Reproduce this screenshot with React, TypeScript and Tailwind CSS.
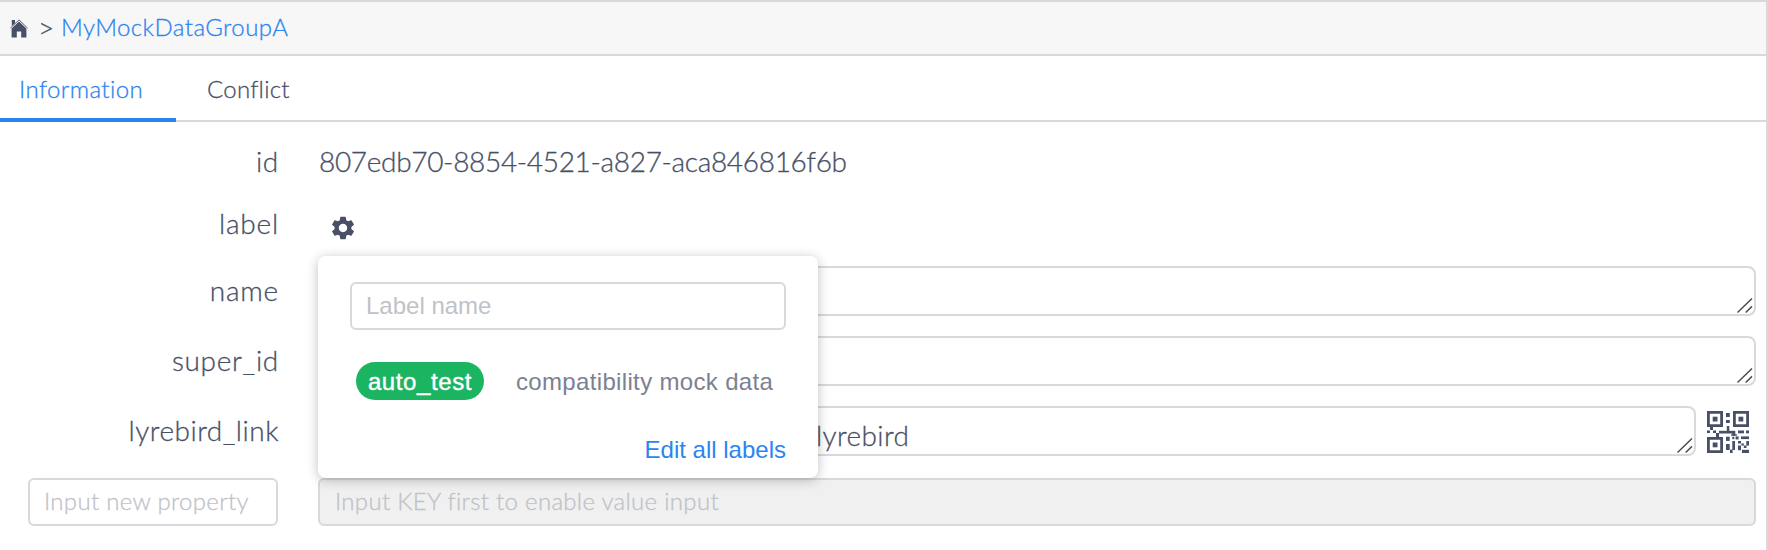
import type { ReactNode } from "react";
import { MdSettings } from "react-icons/md";

const light =
  "font-['Lato',sans-serif] font-light whitespace-nowrap [font-variant-ligatures:none] [-webkit-text-stroke:0.3px_currentColor]";

function HomeIcon() {
  return (
    <svg width="18" height="19" viewBox="0 0 18 19" fill="#475066">
      <path d="M1.8 1h3.2v3.2L1.8 7z" />
      <path d="M0.4 9.1 9 0.9l8.6 8.2" fill="none" stroke="#475066" strokeWidth="0.9" />
      <path d="M9 2.5 16.4 9.5V18.4H11.2V12.6H6.8V18.4H1.6V9.5z" />
    </svg>
  );
}

const finder = (x: number, y: number) => `M${x} ${y}h16v16h-16zM${x + 2.8} ${y + 2.8}v10.4h10.4v-10.4z`;

const modules: number[][] = [
  [5.7, 5.7, 4.8, 4.8], [31.5, 5.7, 4.8, 4.8], [5.7, 31.5, 4.8, 4.8],
  [19, 2, 3.8, 4], [19, 9, 3.8, 3], [19.8, 15, 2.5, 5],
  [3, 16, 3, 3], [0, 19.5, 3, 2.5], [6, 19.5, 3, 2.5], [9, 22, 3, 4],
  [12, 19.8, 16, 2.7], [25.3, 20, 3, 4.8],
  [31, 19.5, 6, 2.8], [39, 19.5, 3, 2.8], [28.6, 25.4, 3, 3], [34, 25.4, 8, 2.7], [24, 23.3, 6, 1.3],
  [19, 25.7, 3.7, 4.2], [19, 33, 3.7, 6], [23, 38.6, 2.6, 3.4],
  [25.3, 30, 2.7, 9], [25.3, 25.7, 2, 2.5], [31, 30, 3, 2.5], [31, 34.5, 3, 4.7],
  [34.4, 32.4, 2.4, 2.2], [36.8, 34.5, 2.7, 2.5], [39.3, 30, 2.7, 4.6], [35, 38.8, 7, 3.2],
];

function QrIcon() {
  return (
    <svg width="42" height="42" viewBox="0 0 42 42" fill="#475066">
      <path d={finder(0, 0) + finder(26, 0) + finder(0, 26)} fillRule="evenodd" />
      {modules.map(([x, y, w, h]) => (
        <rect key={`${x}-${y}`} x={x} y={y} width={w} height={h} />
      ))}
    </svg>
  );
}

function Grip() {
  return (
    <svg className="mr-px" width="16" height="16" viewBox="0 0 16 16" stroke="#4d4d4d" strokeWidth="1.5">
      <path d="M0.5 14.5 15 0.5M8.7 14.5 15 8.4" />
    </svg>
  );
}

function Area({ children }: { children?: ReactNode }) {
  return (
    <div className="flex h-[50px] flex-1 items-end justify-between rounded-lg border-2 border-[#d8d8de] bg-white">
      <div className={`${light} pb-0.5 pl-[496px] text-[28px] leading-[34px] tracking-[0.4px]`}>{children}</div>
      <Grip />
    </div>
  );
}

interface RowProps {
  name: string;
  height: string;
  tracking: string;
  lift?: string;
  children: ReactNode;
}

function Row({ name, height, tracking, lift = "pb-[3px]", children }: RowProps) {
  return (
    <div className={`flex items-center ${height}`}>
      <div className={`${light} ${tracking} ${lift} w-[279px] text-right text-[28px] leading-8`}>{name}</div>
      <div className="ml-[39px] flex flex-1 items-center">{children}</div>
    </div>
  );
}

function LabelPopover() {
  return (
    <div className="absolute top-[256px] left-[318px] h-[222px] w-[500px] rounded-lg bg-white px-8 pt-[26px] font-['Liberation_Sans',sans-serif] text-2xl whitespace-nowrap shadow-[0_2px_12px_rgba(0,0,0,0.25)]">
      <div className="flex h-12 w-[436px] items-center rounded-md border-2 border-[#d8d8de] pl-[14px] text-[#bfc2c8]">
        Label name
      </div>
      <div className="mt-8 ml-1.5 flex h-[38px] items-center">
        <span className="flex h-[38px] w-32 items-center justify-center rounded-full bg-[#1bb562] pt-px tracking-[0.6px] text-white [-webkit-text-stroke:0.4px_white]">
          auto_test
        </span>
        <span className="ml-8 pt-px tracking-[0.34px] text-[#7b8192]">compatibility mock data</span>
      </div>
      <div className="mt-8 text-right leading-9 text-[#2b85f0]">Edit all labels</div>
    </div>
  );
}

export default function App() {
  return (
    <div className="relative h-[550px] w-[1768px] overflow-hidden border-t-2 border-r-2 border-[#d8d8de] bg-white text-[#475066]">
      <header className="flex h-[54px] items-center border-b-2 border-[#d8d8de] bg-[#f7f7f7] pb-[2px] pl-2.5">
        <div className="pt-[3px]">
          <HomeIcon />
        </div>
        <span className={`${light} ml-2.5 w-[23px] text-[28px] leading-8`}>&gt;</span>
        <span className={`${light} text-2xl tracking-[0.45px] text-[#2b85f0]`}>MyMockDataGroupA</span>
      </header>
      <nav className="flex h-[66px] border-b-2 border-[#d8d8de] text-2xl">
        <div className={`${light} flex h-[66px] w-44 items-center border-b-4 border-[#2b85f0] pt-1 pl-[19px] tracking-[0.4px] text-[#2b85f0]`}>
          Information
        </div>
        <div className={`${light} ml-[31px] flex h-16 items-center pt-0.5 tracking-[0.25px]`}>Conflict</div>
      </nav>
      <main className="pt-2 pr-2.5">
        <Row name="id" height="h-[62px]" tracking="tracking-[0.7px]" lift="pb-0">
          <span className={`${light} ml-px text-[28px] leading-8 tracking-[-0.32px]`}>807edb70-8854-4521-a827-aca846816f6b</span>
        </Row>
        <Row name="label" height="h-16" tracking="tracking-[0.8px]" lift="pb-[2px]">
          <MdSettings size={28} className="mt-[7px] ml-[11px]" />
        </Row>
        <Row name="name" height="h-[70px]" tracking="tracking-[0.8px]">
          <Area />
        </Row>
        <Row name="super_id" height="h-[70px]" tracking="tracking-[0.7px]">
          <Area />
        </Row>
        <Row name="lyrebird_link" height="h-[70px]" tracking="tracking-[0.5px]">
          <Area>lyrebird</Area>
          <div className="mr-[7px] ml-[11px] pt-0.5">
            <QrIcon />
          </div>
        </Row>
        <div className={`${light} flex h-[72px] items-center pl-7 text-2xl tracking-[0.3px] text-[#bfc2c8]`}>
          <div className="flex h-12 w-[250px] items-center rounded-md border-2 border-[#d8d8de] pb-0.5 pl-[14px]">Input new property</div>
          <div className="ml-10 flex h-12 flex-1 items-center rounded-md border-2 border-[#d8d8de] bg-[#f0f0f0] pb-0.5 pl-[15px]">
            Input KEY first to enable value input
          </div>
        </div>
      </main>
      <div className="absolute -top-0.5 left-0">
        <LabelPopover />
      </div>
    </div>
  );
}
